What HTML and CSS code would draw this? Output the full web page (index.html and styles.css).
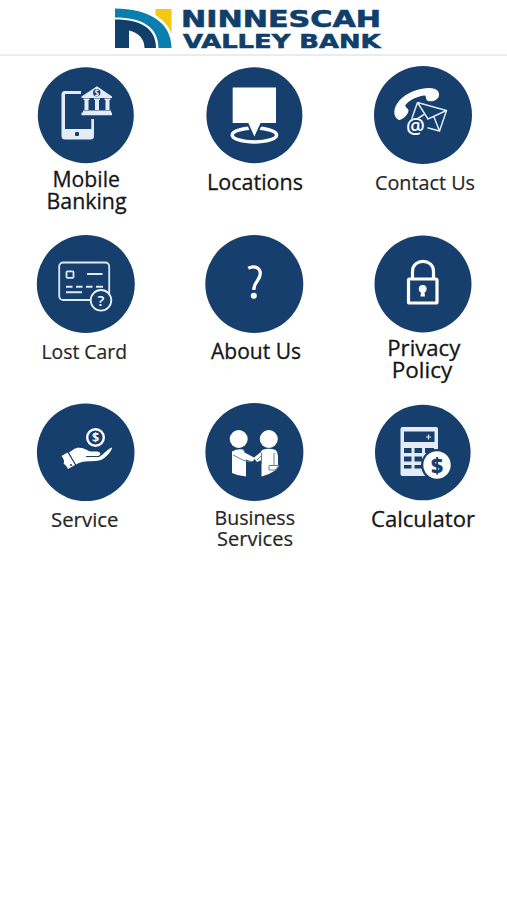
FILE: index.html
```html
<!DOCTYPE html>
<html lang="en">
<head>
    <meta charset="UTF-8">
    <meta name="viewport" content="width=device-width, initial-scale=1.0">
    <title>Ninnescah Valley Bank</title>
    <link rel="stylesheet" href="styles.css">
</head>
<body>
    <header class="header">
        <svg class="logo" viewBox="110 0 280 54">
            <path class="gold" d="M155.500 9H171.500V34C169 26 163 20 155.500 15Z"/>
            <path class="teal" d="M115 8.500C148 8.500 171.500 22 171.500 48H158.500C158.500 27 142 17.500 115 17.500Z"/>
            <path class="navy" d="M115 19.500C142 19.500 156 29 156 48H144.500C144.500 39 139 33 129 30.500V48H115Z"/>
            <text class="brand" x="181" y="26.500" font-size="22.500" textLength="200" lengthAdjust="spacingAndGlyphs">NINNESCAH</text>
            <text class="brand" x="183" y="48" font-size="19.500" textLength="197.500" lengthAdjust="spacingAndGlyphs">VALLEY BANK</text>
        </svg>
    </header>

    <main class="menu">
        <!-- Mobile Banking -->
        <a class="tile">
            <svg viewBox="0 56 169 168.500">
                <circle class="disc" cx="85.800" cy="115.200" r="48"/>
                <path class="pale" d="M81 91H65Q61.500 91 61.500 94.500V136Q61.500 139.500 65 139.500H90.500Q94 139.500 94 136V119H91.300V129H65V94H81Z"/>
                <rect class="disc" x="75" y="132" width="4" height="4" rx="1"/>
                <path class="pale" d="M81.500 96.500L97 86.300L112 96.500V98H81.500ZM84.500 100H88.500V110H84.500ZM95 100H99V110H95ZM105.500 100H109.500V110H105.500ZM83 110.500H111V112.500H112V115.200H81.500V112.500H83Z"/>
                <path class="pale" d="M83.500 98.500H89.500V100H83.500ZM94 98.500H100V100H94ZM104.500 98.500H110.500V100H104.500Z"/>
                <circle class="disc" cx="96.700" cy="92.700" r="3.700"/>
                <text class="glyph" x="96.700" y="95.500" font-size="8">$</text>
                <text class="label" x="52.500" y="186.700" textLength="67.500" lengthAdjust="spacingAndGlyphs">Mobile</text>
                <text class="label" x="46.500" y="208.500" textLength="80" lengthAdjust="spacingAndGlyphs">Banking</text>
            </svg>
        </a>
        <!-- Locations -->
        <a class="tile">
            <svg viewBox="169 56 169 168.500">
                <circle class="disc" cx="254.400" cy="115.200" r="48"/>
                <ellipse class="line" cx="254.400" cy="135" rx="22.200" ry="7" stroke-width="3.400"/>
                <path class="disc" d="M246 121H263L257.500 136H251.500Z"/>
                <path class="white" d="M232.700 87.500H276V123H260.500L254.400 136.500L248.300 123H232.700Z"/>
                <text class="label" x="207" y="190.300" textLength="96" lengthAdjust="spacingAndGlyphs">Locations</text>
            </svg>
        </a>
        <!-- Contact Us -->
        <a class="tile">
            <svg viewBox="338 56 169 168.500">
                <circle class="disc" cx="423" cy="115" r="49"/>
                <path class="white" d="M394.300 112C394.500 104 402 96 413 91.300C422 87.800 434 86 438 91C439.500 94 439.500 96.500 437.500 98.500C435 101.500 429 102 427 100.500C425.500 99 426.500 96.500 425 95.500C418 96 409 100 405.500 105C404.500 107 408.500 108.500 408.500 110.500C408.500 114 403 119.500 399.500 120C396.500 119.500 394.300 116 394.300 112Z"/>
                <path class="line soft" d="M417.500 102.500L446.500 110.500L439.500 131L427.500 127.800M417.500 102.500L411.500 119.500M417.500 102.500L428 119L446.500 110.500M434 117L439.500 131M424 114.500L417 119" stroke-width="1.500"/>
                <circle class="disc" cx="415.500" cy="128.500" r="10.500"/>
                <text class="glyph" x="415.500" y="134.300" font-size="21">@</text>
                <text class="label light" x="375" y="190" textLength="100" lengthAdjust="spacingAndGlyphs">Contact Us</text>
            </svg>
        </a>
        <!-- Lost Card -->
        <a class="tile">
            <svg viewBox="0 224.500 169 168.500">
                <circle class="disc" cx="85.800" cy="283.500" r="49"/>
                <rect class="line soft" x="59.200" y="262" width="50" height="37.500" rx="4" stroke-width="1.800"/>
                <rect class="line soft" x="66.500" y="270.800" width="7" height="6.500" rx="1" stroke-width="1.800"/>
                <path class="line soft" d="M87 273.500H102.500M66 286.200H72.500M76 286.200H82.500M86 286.200H92.500M96 286.200H103M66 291.800H82" stroke-width="1.900"/>
                <circle class="badge" cx="101" cy="299.800" r="10.300"/>
                <text class="glyph" x="101" y="305.300" font-size="15">?</text>
                <text class="label light" x="41.500" y="358.500" textLength="85.500" lengthAdjust="spacingAndGlyphs">Lost Card</text>
            </svg>
        </a>
        <!-- About Us -->
        <a class="tile">
            <svg viewBox="169 224.500 169 168.500">
                <circle class="disc" cx="254.300" cy="283.500" r="49"/>
                <path class="line" d="M248.300 267.700C254 264.700 260.300 267 260.300 273C260.300 280 253.800 281 253.800 289.500" stroke-width="3.300"/>
                <circle class="white" cx="253.800" cy="295.300" r="3"/>
                <text class="label" x="211" y="358.800" textLength="90" lengthAdjust="spacingAndGlyphs">About Us</text>
            </svg>
        </a>
        <!-- Privacy Policy -->
        <a class="tile">
            <svg viewBox="338 224.500 169 168.500">
                <circle class="disc" cx="423" cy="283.500" r="48.500"/>
                <path class="line" d="M412.500 278V271C412.500 257.500 433.500 257.500 433.500 271V278" stroke-width="3.200"/>
                <rect class="line" x="408.500" y="278.500" width="28.500" height="24" rx="1" stroke-width="3.200"/>
                <circle class="white" cx="422.700" cy="288.300" r="3.900"/>
                <path class="white" d="M421.200 289H424.200L425 296H420.500Z"/>
                <text class="label" x="387.300" y="355.900" textLength="73" lengthAdjust="spacingAndGlyphs">Privacy</text>
                <text class="label" x="391.800" y="377.600" textLength="60.500" lengthAdjust="spacingAndGlyphs">Policy</text>
            </svg>
        </a>
        <!-- Service -->
        <a class="tile">
            <svg viewBox="0 393 169 168.500">
                <circle class="disc" cx="85.700" cy="452.300" r="48.800"/>
                <circle class="line" cx="95.500" cy="437.500" r="8.300" stroke-width="2.400"/>
                <text class="glyph heavy" x="95.500" y="442" font-size="12.500">$</text>
                <path class="white" d="M61.500 456L67.500 452.500L75 465L68 469Q66.500 465.500 63.500 463.500Q65.500 461 61.500 456Z"/>
                <path class="white" d="M69 452.500C73 450 75 447.500 79.500 447.800C85 448 87 451 91 451.500C95 452 100 450.500 100.500 454L98.500 456H86V457H99C104 454 108 448.500 112 447.500C112.500 450 106 458 101 460C92 462.500 84 459.500 76 464.500Z"/>
                <circle class="disc" cx="71" cy="465" r="1"/>
                <text class="label light" x="51" y="527.200" textLength="67.500" lengthAdjust="spacingAndGlyphs">Service</text>
            </svg>
        </a>
        <!-- Business Services -->
        <a class="tile">
            <svg viewBox="169 393 169 168.500">
                <circle class="disc" cx="254.400" cy="452.100" r="49"/>
                <circle class="white" cx="238.700" cy="439" r="9"/>
                <circle class="white" cx="268.800" cy="439" r="9"/>
                <path class="white" d="M232 451.500Q237 448.500 243 449.500L245.500 453L254 457.500Q255 461 251.500 461.500L246 459.500V476.500Q238 476 232 473Z"/>
                <path class="seam" d="M233 455L244 460.500L251 462M243.500 449.500L245 453"/>
                <path class="white" d="M262 450Q269 447.500 275.500 450Q278 452 278 458V465L279 466L276 470L269 474L261.500 476.500V460L257 462L253.500 458L261 452Z"/>
                <path class="seam" d="M261.500 453V464M274 453V465M269 465.500H279L275 470H269ZM262 455L257 460"/>
                <text class="label light" x="214.500" y="524.700" textLength="80.500" lengthAdjust="spacingAndGlyphs">Business</text>
                <text class="label light" x="217" y="546" textLength="76" lengthAdjust="spacingAndGlyphs">Services</text>
            </svg>
        </a>
        <!-- Calculator -->
        <a class="tile">
            <svg viewBox="338 393 169 168.500">
                <circle class="disc" cx="422.800" cy="452.500" r="47.800"/>
                <rect class="pale" x="400.500" y="427" width="37.500" height="49" rx="2"/>
                <path class="disc" d="M404 431.500H434.500V442H404ZM404 448H411.500V453H404ZM414.500 448H422V453H414.500ZM425 448H434V453H425ZM404 456.500H411.500V461.500H404ZM414.500 456.500H422V461.500H414.500ZM404 465H411.500V468.500H404ZM414.500 465H422V468.500H414.500Z"/>
                <path class="line soft" d="M428.500 434.500V439.500M426 437H431" stroke-width="1.200"/>
                <circle class="disc" cx="437" cy="465" r="16"/>
                <circle class="white" cx="437" cy="465" r="13.700"/>
                <text class="dollar" x="437" y="472.500" font-size="21">$</text>
                <text class="label" x="371" y="527.200" textLength="104" lengthAdjust="spacingAndGlyphs">Calculator</text>
            </svg>
        </a>
    </main>
</body>
</html>
```
FILE: styles.css
```css
* {
    box-sizing: border-box;
}
body {
    margin: 0;
    background: #fff;
    font-family: "Open Sans", sans-serif;
}
.header {
    display: flex;
    justify-content: center;
    height: 56px;
    padding-right: 7px;
    border-bottom: 2px solid #ebebeb;
}
.logo {
    width: 280px;
    height: 54px;
}
.gold {
    fill: #f2ca16;
}
.teal {
    fill: #087fae;
}
.navy, .brand {
    fill: #103f6b;
}
.brand {
    font-family: "DejaVu Sans", sans-serif;
    font-weight: bold;
    stroke: #103f6b;
    stroke-width: 0.6;
}

/* Menu grid */
.menu {
    display: grid;
    grid-template-columns: repeat(3, 169px);
    grid-auto-rows: 168.5px;
}
.tile svg {
    display: block;
    width: 169px;
    height: 168.5px;
}
.disc {
    fill: #173f6d;
}
.white {
    fill: #fff;
}
.pale {
    fill: #e3ecf6;
}
.line {
    fill: none;
    stroke: #fff;
}
.soft {
    stroke: #dcebf4;
}
.seam {
    fill: none;
    stroke: #4f86aa;
    stroke-width: 1;
}
.badge {
    fill: #173f6d;
    stroke: #e8f2f8;
    stroke-width: 1.8;
}

/* Text */
.label {
    font-size: 22px;
    fill: #161616;
    stroke: #161616;
    stroke-width: 0.3;
}
.light {
    font-size: 20px;
    fill: #262626;
    stroke: #262626;
    stroke-width: 0.2;
}
.glyph, .dollar {
    text-anchor: middle;
    font-weight: 600;
    fill: #fff;
}
.heavy {
    font-weight: bold;
}
.dollar {
    font-weight: 800;
    fill: #173f6d;
}
```
